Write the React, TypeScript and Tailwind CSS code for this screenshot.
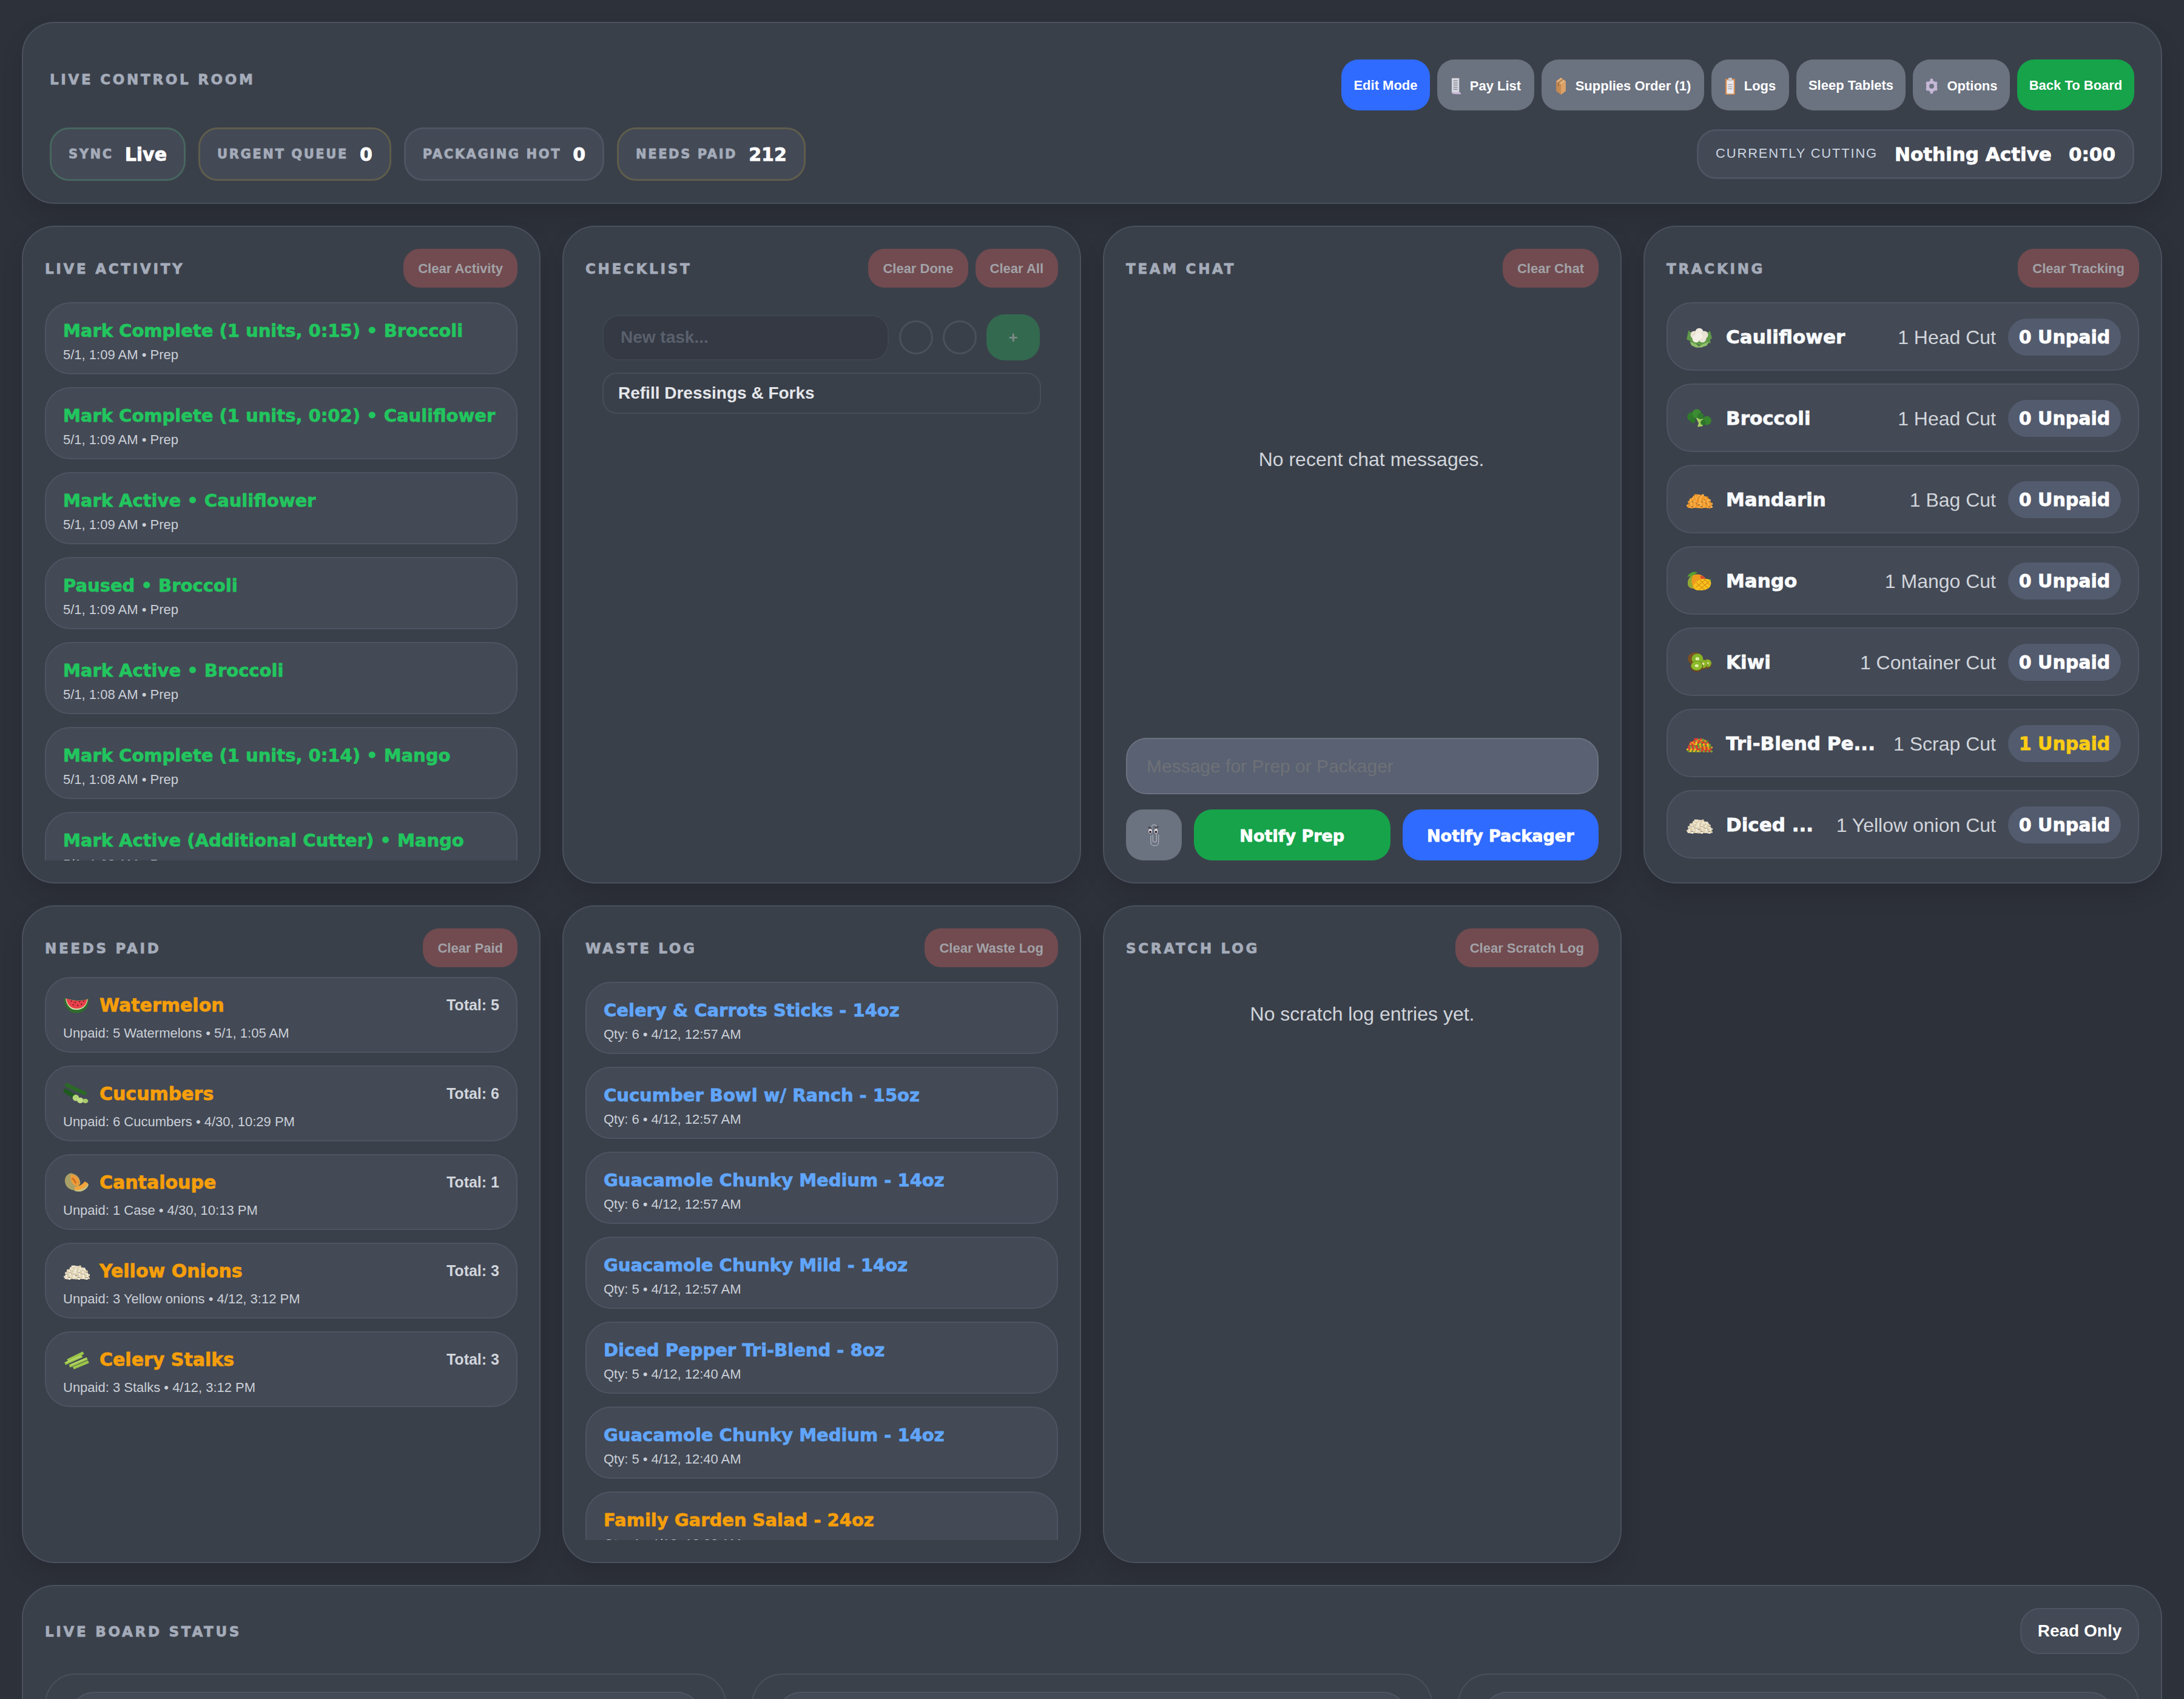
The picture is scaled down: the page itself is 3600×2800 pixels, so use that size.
import type { ReactNode } from "react";

const heavy = "font-['DejaVu_Sans',sans-serif] font-bold [-webkit-text-stroke:0.8px_currentColor]";
const sectionTitle = `${heavy} text-[23px] tracking-[3.7px] text-[#a4abb9]`;

// little pile of diced food, used for mandarin, onion and the pepper blend
function Pile({ colors }: { colors: string[] }) {
  const bits: ReactNode[] = [];
  let n = 0;
  for (let row = 0; row < 8; row++) {
    const half = Math.round(20 * Math.sqrt(1 - ((7.4 - row) / 8) ** 2));
    for (let x = -half; x <= half - 2; x += 3) {
      const mix = ((n * 2654435761) >>> 9) % colors.length;
      bits.push(
        <rect
          key={n}
          x={21 + x + (row % 2) * 1.5}
          y={8 + row * 2.6 + (mix % 3) * 0.5}
          width={3.4}
          height={3.2}
          rx={0.9}
          fill={colors[mix]}
        />
      );
      n++;
    }
  }
  return (
    <svg viewBox="0 0 42 34" className="w-[44px] h-[36px]">
      {bits}
    </svg>
  );
}

function FoodIcon({ name }: { name: string }) {
  if (name === "cauliflower")
    return (
      <svg viewBox="0 0 42 34" className="w-[44px] h-[36px]">
        <path d="M1 20 4 6l5 4 24 0 5-3 3 11-3 3 1 5-8 0-7 5-6-3-8 1-3-6z" fill="#5f9a48" />
        <path d="M6 24c6 2 10 3 15 7 5-4 10-5 15-7l-3 6-9 3h-8l-7-3z" fill="#8fbf6a" />
        <circle cx="13" cy="13" r="6" fill="#e8e2d2" />
        <circle cx="21" cy="9" r="6.5" fill="#f1ecdf" />
        <circle cx="29" cy="13" r="6" fill="#e8e2d2" />
        <circle cx="16" cy="19" r="6" fill="#f3efe4" />
        <circle cx="26" cy="19" r="6" fill="#ebe5d6" />
        <circle cx="21" cy="15" r="5" fill="#f5f1e8" />
      </svg>
    );
  if (name === "broccoli")
    return (
      <svg viewBox="0 0 42 34" className="w-[44px] h-[36px]">
        <path d="M16 16 20 24l-2 6 8-1 2-6 6-3-10-4z" fill="#a4cc62" />
        <circle cx="9" cy="14" r="7" fill="#2f7a2c" />
        <circle cx="17" cy="9" r="7" fill="#3c8c33" />
        <circle cx="23" cy="13" r="5" fill="#2f7a2c" />
        <circle cx="33" cy="20" r="7" fill="#38852f" />
        <circle cx="27" cy="23" r="4" fill="#2d7529" />
        <circle cx="11" cy="20" r="4" fill="#2d7529" />
      </svg>
    );
  if (name === "mandarin") return <Pile colors={["#f59a2c", "#f8ab3e", "#e98a20", "#fbb44a"]} />;
  if (name === "onion") return <Pile colors={["#f0e6cd", "#e4d7b7", "#f7f0df", "#dccda9"]} />;
  if (name === "blend") return <Pile colors={["#e53935", "#f3c11f", "#5f9130", "#ee8f1f", "#d83a2c", "#7aa33a"]} />;
  if (name === "mango")
    return (
      <svg viewBox="0 0 42 34" className="w-[44px] h-[36px]">
        <path d="M2 10C6 3 12 1 18 3l-8 6z" fill="#55a02f" />
        <path d="M30 14c4-1 8-1 10 1-2 4-5 5-8 4z" fill="#5fa035" />
        <path d="M3 22C2 12 9 6 18 6c6 0 11 3 13 8L15 28C9 29 4 27 3 22z" fill="#ee9a1e" />
        <path d="M3 22C2 15 6 9 12 7 8 12 8 20 12 27 7 28 4 26 3 22z" fill="#8faa35" />
        <path d="M22 8c5 0 8 3 9 6l-6 2z" fill="#dc4a2c" />
        <path d="M12 24c2-6 10-11 18-11 7 0 11 4 9 10-2 7-12 9-20 8-5 0-8-3-7-7z" fill="#f7c21e" />
        <path d="M16 19l14 12M22 15l13 13M29 13l9 10M15 27 31 14M20 31l17-14" stroke="#d98a12" strokeWidth="1" fill="none" />
      </svg>
    );
  if (name === "kiwi")
    return (
      <svg viewBox="0 0 42 34" className="w-[44px] h-[36px]">
        <circle cx="33" cy="19" r="7.5" fill="#6d4a1f" />
        <circle cx="34" cy="18" r="6" fill="#8cb62a" />
        <circle cx="34" cy="18" r="2" fill="#e3eca8" />
        <circle cx="26" cy="20" r="8" fill="#6d4a1f" />
        <circle cx="27" cy="19" r="6.5" fill="#8cb62a" />
        <circle cx="27" cy="19" r="2" fill="#e3eca8" />
        <ellipse cx="15" cy="11" rx="12" ry="10" fill="#7a4f22" />
        <ellipse cx="18" cy="11" rx="9" ry="8" fill="#84b52a" />
        <ellipse cx="18" cy="11" rx="3" ry="2.5" fill="#e3eca8" />
        <ellipse cx="17" cy="23" rx="10" ry="8.5" fill="#6b451c" />
        <ellipse cx="17" cy="22" rx="9" ry="7.2" fill="#8cbb2b" />
        <ellipse cx="17" cy="22" rx="3" ry="2.3" fill="#e3eca8" />
      </svg>
    );
  if (name === "watermelon")
    return (
      <svg viewBox="0 0 42 34" className="w-[44px] h-[36px]">
        <path d="M2 5c14 5 28 5 38 1 1 11-5 23-19 23C9 29 1 18 2 5z" fill="#2f6d2b" />
        <path d="M4 6c13 4 24 5 35 1-1 9-7 17-18 17C11 24 5 16 4 6z" fill="#d8e8b5" />
        <path d="M5 6c12 4 23 5 33 1-1 8-6 15-17 15C12 22 6 15 5 6z" fill="#e8404a" />
        <path d="M12 10h2M18 12h2M25 11h2M31 10h2M15 16h2M22 17h2M28 15h2" stroke="#4a1420" strokeWidth="1.4" />
      </svg>
    );
  if (name === "cucumber")
    return (
      <svg viewBox="0 0 42 34" className="w-[44px] h-[36px]">
        <path d="M6 3 34 16" stroke="#2a6a25" strokeWidth="6" strokeLinecap="round" />
        <path d="M4 12 24 25" stroke="#1f5a20" strokeWidth="7" strokeLinecap="round" />
        <ellipse cx="20" cy="23" rx="5" ry="5" fill="#b6d67a" />
        <ellipse cx="27" cy="27" rx="5" ry="4.5" fill="#c2dd86" />
        <ellipse cx="35" cy="28" rx="4.5" ry="3.5" fill="#a8cc6a" />
      </svg>
    );
  if (name === "cantaloupe")
    return (
      <svg viewBox="0 0 42 34" className="w-[44px] h-[36px]">
        <path d="M12 2C5 4 2 10 3 16c1 8 8 13 16 13l8-10C28 10 21 3 12 2z" fill="#a8a066" />
        <path d="M12 4c8 0 14 6 14 14 0 3-3 5-6 4-6-2-9-9-8-18z" fill="#ee9b3a" />
        <path d="M14 10c3 2 5 5 6 8" stroke="#c96f1e" strokeWidth="2.5" fill="none" />
        <path d="M18 24c7-1 14-5 16-9l5 3c1 7-9 15-21 10z" fill="#f2a33a" />
        <path d="M18 28c8 2 19-3 21-10l1 2c-1 7-12 14-22 10z" fill="#c9c07d" />
      </svg>
    );
  // celery
  return (
    <svg viewBox="0 0 42 34" className="w-[44px] h-[36px]">
      <path d="M3 23 30 11M10 27 38 15M7 18 32 6M16 30 40 20" stroke="#9cc649" strokeWidth="4.5" />
      <path d="M5 21 28 11M12 25 36 15" stroke="#c3dd78" strokeWidth="1.4" />
    </svg>
  );
}

function ReceiptIcon() {
  return (
    <svg viewBox="0 0 20 34" className="w-[18px] h-[30px]">
      <path d="M2 2h14v27H2z" fill="#d6d8e0" />
      <path d="M2 28c0 4 4 4 16 4 2 0 2-3-2-4z" fill="#c9b9d8" />
      <path d="M5 7h8M5 11h8M5 15h8M5 19h8M5 23h8" stroke="#8a8d99" strokeWidth="1.6" />
    </svg>
  );
}

function BoxIcon() {
  return (
    <svg viewBox="0 0 22 34" className="w-[20px] h-[30px]">
      <path d="M11 1 20 8v18l-9 7-9-7V8z" fill="#c48a52" />
      <path d="M11 14 20 8v18l-9 7z" fill="#dca268" />
      <path d="M11 1 20 8l-9 6-9-6z" fill="#e0b07a" />
      <path d="M15 4 6 11v6" stroke="#9c6a3a" strokeWidth="1.6" fill="none" />
    </svg>
  );
}

function ClipboardIcon() {
  return (
    <svg viewBox="0 0 20 34" className="w-[18px] h-[30px]">
      <rect x="1" y="3" width="18" height="30" rx="1.5" fill="#d98d50" />
      <rect x="3.5" y="6" width="13" height="25" fill="#e8e8ee" />
      <rect x="6.5" y="1" width="7" height="7" rx="2" fill="#c9c9d2" />
      <path d="M6 14h8M6 18h8M6 22h8" stroke="#9a9ca8" strokeWidth="1.6" />
    </svg>
  );
}

function GearIcon() {
  return (
    <svg viewBox="0 0 24 34" className="w-[22px] h-[30px]">
      <circle cx="12" cy="17" r="7.5" fill="none" stroke="#c5b8d6" strokeWidth="6" />
      <path d="M12 3v6M12 25v6M2 10l5 3M17 21l5 3M2 24l5-3M17 13l5-3" stroke="#c5b8d6" strokeWidth="5" />
    </svg>
  );
}

function ClippyIcon() {
  return (
    <svg viewBox="0 0 26 46" className="w-[22px] h-[40px]">
      <path
        d="M9 12V7c0-5 9-5 9 0v27c0 4-7 4-7 0V22M22 22v16c0 8-15 8-15 0V24"
        fill="none"
        stroke="#a4a7ae"
        strokeWidth="1.8"
      />
      <path d="M2 8l7 2M15 9l7-2" stroke="#3a3336" strokeWidth="2" />
      <ellipse cx="6" cy="16" rx="3.4" ry="4.4" fill="#e8e8ec" />
      <ellipse cx="17" cy="16" rx="3.4" ry="4.4" fill="#e8e8ec" />
      <circle cx="6" cy="17" r="2.4" fill="#3a2428" />
      <circle cx="17" cy="17" r="2.4" fill="#3a2428" />
    </svg>
  );
}

function Chip({ label, value, border }: { label: string; value: string; border: string }) {
  return (
    <div className={`h-[88px] px-[28px] flex items-center gap-[19px] rounded-[32px] border-[3px] bg-[#434955] ${border}`}>
      <span className={`${heavy} pt-[2px] text-[21px] tracking-[2.6px] text-[#a4abb9]`}>{label}</span>
      <span className={`${heavy} text-[30px] text-white`}>{value}</span>
    </div>
  );
}

function TopButton({ children, size, color = "bg-[#6b7280]" }: { children: ReactNode; size: string; color?: string }) {
  return (
    <button className={`h-[84px] flex items-center justify-center gap-[14px] rounded-[28px] text-[22px] font-bold text-white ${size} ${color}`}>
      {children}
    </button>
  );
}

function ClearButton({ children }: { children: ReactNode }) {
  return (
    <button className="h-[64px] px-[24px] rounded-[27px] bg-[#714b50] text-[22px] font-bold text-[#a2a2a7]">
      {children}
    </button>
  );
}

function Panel({ title, actions, children, gap = "mb-[24px]" }: { title: string; actions: ReactNode; children: ReactNode; gap?: string }) {
  return (
    <section className="h-[1084px] flex flex-col px-[36px] pt-[36px] pb-[36px] rounded-[54px] border-2 border-[#4a505c] bg-[#3a404a] shadow-[0_18px_36px_rgba(0,0,0,0.12)]">
      <div className={`flex items-center justify-between ${gap}`}>
        <h2 className={`${sectionTitle} pt-[3px]`}>{title}</h2>
        <div className="flex gap-[12px]">{actions}</div>
      </div>
      {children}
    </section>
  );
}

function LogCard({ title, sub, color }: { title: string; sub: string; color: string }) {
  return (
    <div className="h-[119px] shrink-0 flex flex-col justify-center gap-[8px] px-[28px] pt-[8px] rounded-[42px] border-2 border-[#4e5462] bg-[#434955]">
      <div className={`${heavy} text-[29px] leading-[38px] whitespace-nowrap ${color}`}>{title}</div>
      <div className="text-[22px] leading-[26px] text-[#cbd0d8]">{sub}</div>
    </div>
  );
}

const activity = [
  "Mark Complete (1 units, 0:15) • Broccoli",
  "Mark Complete (1 units, 0:02) • Cauliflower",
  "Mark Active • Cauliflower",
  "Paused • Broccoli",
  "Mark Active • Broccoli",
  "Mark Complete (1 units, 0:14) • Mango",
  "Mark Active (Additional Cutter) • Mango",
];
const activityTimes = ["1:09", "1:09", "1:09", "1:09", "1:08", "1:08", "1:08"];

const tracking = [
  { icon: "cauliflower", name: "Cauliflower", cut: "1 Head Cut", unpaid: 0 },
  { icon: "broccoli", name: "Broccoli", cut: "1 Head Cut", unpaid: 0 },
  { icon: "mandarin", name: "Mandarin", cut: "1 Bag Cut", unpaid: 0 },
  { icon: "mango", name: "Mango", cut: "1 Mango Cut", unpaid: 0 },
  { icon: "kiwi", name: "Kiwi", cut: "1 Container Cut", unpaid: 0 },
  { icon: "blend", name: "Tri-Blend Pe...", cut: "1 Scrap Cut", unpaid: 1 },
  { icon: "onion", name: "Diced ...", cut: "1 Yellow onion Cut", unpaid: 0 },
];

const unpaid = [
  { icon: "watermelon", name: "Watermelon", total: 5, sub: "Unpaid: 5 Watermelons • 5/1, 1:05 AM" },
  { icon: "cucumber", name: "Cucumbers", total: 6, sub: "Unpaid: 6 Cucumbers • 4/30, 10:29 PM" },
  { icon: "cantaloupe", name: "Cantaloupe", total: 1, sub: "Unpaid: 1 Case • 4/30, 10:13 PM" },
  { icon: "onion", name: "Yellow Onions", total: 3, sub: "Unpaid: 3 Yellow onions • 4/12, 3:12 PM" },
  { icon: "celery", name: "Celery Stalks", total: 3, sub: "Unpaid: 3 Stalks • 4/12, 3:12 PM" },
];

const waste = [
  { title: "Celery & Carrots Sticks - 14oz", sub: "Qty: 6 • 4/12, 12:57 AM" },
  { title: "Cucumber Bowl w/ Ranch - 15oz", sub: "Qty: 6 • 4/12, 12:57 AM" },
  { title: "Guacamole Chunky Medium - 14oz", sub: "Qty: 6 • 4/12, 12:57 AM" },
  { title: "Guacamole Chunky Mild - 14oz", sub: "Qty: 5 • 4/12, 12:57 AM" },
  { title: "Diced Pepper Tri-Blend - 8oz", sub: "Qty: 5 • 4/12, 12:40 AM" },
  { title: "Guacamole Chunky Medium - 14oz", sub: "Qty: 5 • 4/12, 12:40 AM" },
  { title: "Family Garden Salad - 24oz", sub: "Qty: 4 • 4/12, 12:38 AM", orange: true },
];

export default function App() {
  return (
    <div className="h-[2800px] overflow-hidden flex flex-col gap-[36px] p-[36px] bg-[#2d313a] font-['Liberation_Sans',Arial,sans-serif]">
      <header className="h-[300px] shrink-0 flex flex-col justify-end gap-[28px] px-[44px] pb-[36px] rounded-[54px] border-2 border-[#4a505c] bg-[#3a404a] shadow-[0_18px_36px_rgba(0,0,0,0.12)]">
        <div className="flex items-center justify-between">
          <h1 className={`${sectionTitle} mb-[18px]`}>LIVE CONTROL ROOM</h1>
          <div className="flex gap-[12px]">
            <TopButton size="w-[146px]" color="bg-[#2f6bff]">Edit Mode</TopButton>
            <TopButton size="w-[160px] pt-[3px]"><ReceiptIcon />Pay List</TopButton>
            <TopButton size="w-[268px] pt-[3px]"><BoxIcon />Supplies Order (1)</TopButton>
            <TopButton size="w-[128px] pt-[3px]"><ClipboardIcon />Logs</TopButton>
            <TopButton size="w-[180px]">Sleep Tablets</TopButton>
            <TopButton size="w-[160px] pt-[3px]"><GearIcon />Options</TopButton>
            <TopButton size="w-[193px]" color="bg-[#16a34a]">Back To Board</TopButton>
          </div>
        </div>
        <div className="flex items-center justify-between">
          <div className="flex gap-[21px]">
            <Chip label="SYNC" value="Live" border="border-[#47665f]" />
            <Chip label="URGENT QUEUE" value="0" border="border-[#5f5d4c]" />
            <Chip label="PACKAGING HOT" value="0" border="border-[#4e5462]" />
            <Chip label="NEEDS PAID" value="212" border="border-[#5f5d4c]" />
          </div>
          <div className="h-[82px] px-[28px] flex items-center gap-[28px] rounded-[32px] border-[3px] border-[#4e5462] bg-[#434955]">
            <span className="-mt-[4px] text-[22px] tracking-[1.8px] text-[#cbd5e1]">CURRENTLY CUTTING</span>
            <span className={`${heavy} text-[31px] text-white`}>Nothing Active</span>
            <span className={`${heavy} text-[31px] text-white`}>0:00</span>
          </div>
        </div>
      </header>

      <div className="grid grid-cols-4 gap-[36px] shrink-0">
        <Panel title="LIVE ACTIVITY" actions={<ClearButton>Clear Activity</ClearButton>}>
          <div className="flex-1 min-h-0 overflow-hidden flex flex-col gap-[21px]">
            {activity.map((line, i) => (
              <LogCard key={line} title={line} sub={`5/1, ${activityTimes[i]} AM • Prep`} color="text-[#22c55e]" />
            ))}
          </div>
        </Panel>

        <Panel
          title="CHECKLIST"
          actions={
            <>
              <ClearButton>Clear Done</ClearButton>
              <ClearButton>Clear All</ClearButton>
            </>
          }
        >
          <div className="flex flex-col gap-[20px] px-[28px] pt-[20px]">
            <div className="flex items-center">
              <div className="w-[472px] h-[75px] flex items-center px-[28px] rounded-[28px] border-2 border-[#3f4551] bg-[#343944] text-[28px] font-bold text-[#5a606c]">
                New task...
              </div>
              <div className="ml-[17px] w-[56px] h-[56px] rounded-full border-[3px] border-[#4a505c]" />
              <div className="ml-[16px] w-[56px] h-[56px] rounded-full border-[3px] border-[#4a505c]" />
              <div className="ml-[16px] w-[88px] h-[76px] flex items-center justify-center rounded-[30px] bg-[#33694f] text-[26px] font-bold text-[#7b8a86]">
                +
              </div>
            </div>
            <div className="h-[68px] flex items-center px-[24px] rounded-[24px] border-2 border-[#474d5a] text-[28px] font-bold text-[#e5e7eb]">
              Refill Dressings &amp; Forks
            </div>
          </div>
        </Panel>

        <Panel title="TEAM CHAT" actions={<ClearButton>Clear Chat</ClearButton>} gap="mb-0">
          <div className="flex-1 min-h-0 pt-[259px] pl-[30px] text-center text-[32px] text-[#d1d5db]">
            No recent chat messages.
          </div>
          <div className="h-[93px] flex items-center px-[32px] rounded-[34px] border-2 border-[#6b7280] bg-[#596172] text-[30px] text-[#6e7177]">
            Message for Prep or Packager
          </div>
          <div className="mt-[25px] flex gap-[20px]">
            <button className="w-[92px] h-[84px] flex items-center justify-center rounded-[28px] bg-[#6b7280]">
              <ClippyIcon />
            </button>
            <button className={`flex-1 h-[84px] pt-[4px] rounded-[30px] bg-[#16a34a] ${heavy} text-[27px] text-white`}>Notify Prep</button>
            <button className={`flex-1 h-[84px] pt-[4px] rounded-[30px] bg-[#2f6bff] ${heavy} text-[27px] text-white`}>Notify Packager</button>
          </div>
        </Panel>

        <Panel title="TRACKING" actions={<ClearButton>Clear Tracking</ClearButton>}>
          <div className="flex flex-col gap-[21px]">
            {tracking.map((t) => (
              <div key={t.name + t.cut} className="h-[113px] flex items-center pl-[30px] pr-[28px] pt-[2px] rounded-[42px] border-2 border-[#4e5462] bg-[#434955]">
                <FoodIcon name={t.icon} />
                <span className={`ml-[22px] ${heavy} text-[31px] text-[#f8fafc] whitespace-nowrap`}>{t.name}</span>
                <span className="ml-auto text-[32px] text-[#d1d5db] whitespace-nowrap">{t.cut}</span>
                <span className={`ml-[20px] w-[186px] h-[61px] flex items-center justify-center rounded-full bg-[#535b6e] ${heavy} text-[30px] whitespace-nowrap ${t.unpaid ? "text-[#facc15]" : "text-white"}`}>
                  {t.unpaid} Unpaid
                </span>
              </div>
            ))}
          </div>
        </Panel>

        <Panel title="NEEDS PAID" actions={<ClearButton>Clear Paid</ClearButton>} gap="mb-[16px]">
          <div className="flex flex-col gap-[21px]">
            {unpaid.map((u) => (
              <div key={u.name} className="h-[125px] flex flex-col justify-center gap-[15px] px-[28px] pt-[9px] rounded-[42px] border-2 border-[#4e5462] bg-[#434955]">
                <div className="flex items-center">
                  <FoodIcon name={u.icon} />
                  <span className={`ml-[16px] ${heavy} text-[30px] leading-[36px] text-[#f59e0b]`}>{u.name}</span>
                  <span className="ml-auto text-[25px] font-bold text-[#d1d5db]">Total: {u.total}</span>
                </div>
                <div className="text-[22px] leading-[26px] text-[#cbd0d8]">{u.sub}</div>
              </div>
            ))}
          </div>
        </Panel>

        <Panel title="WASTE LOG" actions={<ClearButton>Clear Waste Log</ClearButton>}>
          <div className="flex-1 min-h-0 overflow-hidden flex flex-col gap-[21px]">
            {waste.map((w, i) => (
              <LogCard key={i} title={w.title} sub={w.sub} color={w.orange ? "text-[#f59e0b]" : "text-[#60a5fa]"} />
            ))}
          </div>
        </Panel>

        <Panel title="SCRATCH LOG" actions={<ClearButton>Clear Scratch Log</ClearButton>} gap="mb-0">
          <div className="pt-[53px] text-center text-[32px] text-[#d1d5db]">No scratch log entries yet.</div>
        </Panel>
      </div>

      <section className="shrink-0 rounded-[54px] border-2 border-[#4a505c] bg-[#3a404a] px-[36px] pt-[36px] h-[500px]">
        <div className="flex items-center justify-between">
          <h2 className={`${sectionTitle} pt-[3px]`}>LIVE BOARD STATUS</h2>
          <div className="h-[76px] w-[196px] flex items-center justify-center rounded-[32px] border-2 border-[#4e5462] bg-[#434955] text-[28px] font-bold text-white">
            Read Only
          </div>
        </div>
        <div className="mt-[32px] grid grid-cols-3 gap-[42px]">
          {[0, 1, 2].map((i) => (
            <div key={i} className="h-[400px] rounded-[50px] border-2 border-[#4a505c] bg-[#3b414b] px-[38px] pt-[28px]">
              <div className="h-[300px] rounded-[42px] border-2 border-[#4e5462] bg-[#434955]" />
            </div>
          ))}
        </div>
      </section>
    </div>
  );
}
